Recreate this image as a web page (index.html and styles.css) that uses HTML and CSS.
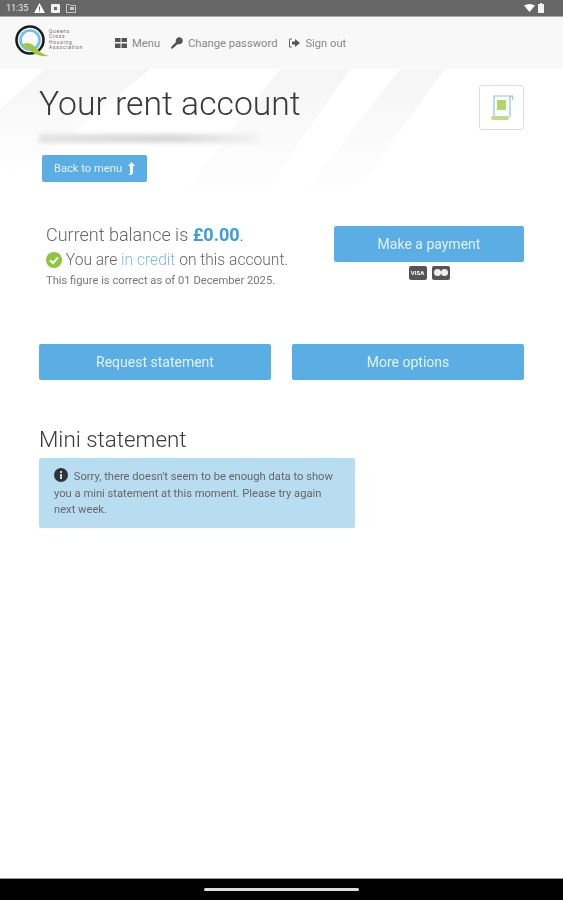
FILE: index.html
```html
<!DOCTYPE html>
<html lang="en">
<head>
    <meta charset="UTF-8">
    <meta name="viewport" content="width=device-width, initial-scale=1.0">
    <title>Your rent account</title>
    <link rel="stylesheet" href="styles.css">
</head>
<body>

    <div class="status-bar">
        <div class="status-left">
            <span class="status-time">11:35</span>
            <svg width="11" height="10" viewBox="0 0 11 10"><path d="M5.500 0 11 10H0Z" fill="#fff"/><rect x="5" y="3.500" width="1" height="3.500" fill="#666"/><rect x="5" y="7.600" width="1" height="1" fill="#666"/></svg>
            <svg width="9" height="9" viewBox="0 0 9 9"><rect width="9" height="9" rx="1" fill="#f2f2f2"/><rect x="3" y="3" width="3" height="3" fill="#666"/></svg>
            <svg width="10" height="10" viewBox="0 0 10 10"><path d="M.5 1.500h3l1 1h5v7h-9Z" fill="none" stroke="#c8c8c8"/><rect x="4" y="4" width="4" height="3" fill="#c8c8c8"/></svg>
        </div>
        <div class="status-right">
            <svg width="11" height="8" viewBox="0 0 11 8"><path d="M0 1.500Q5.500-1.500 11 1.500L5.500 8Z" fill="#fff"/></svg>
            <svg width="6" height="10" viewBox="0 0 6 10"><path d="M2 0h2v1h2v9H0V1h2Z" fill="#f2f2f2"/></svg>
        </div>
    </div>

    <header class="top-nav">
        <div class="logo">
            <svg width="38" height="34" viewBox="0 0 38 34">
                <circle cx="16" cy="15" r="13.500" fill="none" stroke="#1d1d1d" stroke-width="2.600"/>
                <circle cx="16" cy="15" r="9.500" fill="none" stroke="#6cc0ea" stroke-width="2.600"/>
                <path d="M7 20Q15 15 21 22T35 31Q24 32 18 27T7 20Z" fill="#a5c93c"/>
            </svg>
            <div class="logo-text">Queens<br>Cross<br>Housing<br>Association</div>
        </div>
        <nav class="nav-links">
            <a class="nav-link" href="#">
                <svg width="12" height="10" viewBox="0 0 12 10"><path d="M0 0h5.500v4H0ZM6.500 0H12v4H6.500ZM0 5.500h5.500V10H0ZM6.500 5.500H12V10H6.500Z" fill="#555"/></svg>
                Menu
            </a>
            <a class="nav-link" href="#">
                <svg width="12" height="12" viewBox="0 0 12 12"><path d="M0 10 5 5a3.500 3.500 0 1 1 2 2L6 8H5v1H4v1H3l-1 1.500H0Z" fill="#555"/></svg>
                Change password
            </a>
            <a class="nav-link" href="#">
                <svg width="12" height="10" viewBox="0 0 12 10"><path d="M4 1H1.500v8H4" fill="none" stroke="#666"/><path d="M4 3.500h3V1l5 4-5 4V6.500H4Z" fill="#555"/></svg>
                Sign out
            </a>
        </nav>
    </header>

    <main class="page">
        <svg class="page-streaks" width="563" height="130" viewBox="0 0 563 130">
            <defs>
                <linearGradient id="streak-fade" x1="0" y1="0" x2="0" y2="1">
                    <stop offset="0" stop-color="#f5f5f5"/>
                    <stop offset="1" stop-color="#ffffff"/>
                </linearGradient>
            </defs>
            <path d="M0 40 45 0H150L40 90 0 110Z" fill="url(#streak-fade)"/>
            <path d="M180 130 280 0H350L260 130Z" fill="url(#streak-fade)"/>
            <path d="M300 130 400 0H445L350 130Z" fill="url(#streak-fade)"/>
        </svg>

        <div class="title-row">
            <div>
                <h1>Your rent account</h1>
                <div class="redacted"></div>
                <a class="btn btn-back" href="#">
                    Back to menu
                    <svg width="7" height="13" viewBox="0 0 7 13"><path d="M3.500 0 7 4H5v6q0 3-3 3H0q3-1 2-3V4H0Z" fill="#fff"/></svg>
                </a>
            </div>
            <div class="doc-box">
                <svg width="24" height="26" viewBox="0 0 24 26">
                    <path d="M4 21V1H23M20 1V22M20 1Q23 1 23 5" fill="none" stroke="#8cc4e6" stroke-width="1.200"/>
                    <rect x="7" y="5" width="9" height="10" fill="#b5d36b"/>
                    <rect x="1" y="21" width="18" height="4" rx="2" fill="#c3da86"/>
                </svg>
            </div>
        </div>

        <section class="balance-row">
            <div class="balance-info">
                <div class="balance-line">Current balance is <b>£0.00</b>.</div>
                <div class="credit-line">
                    <svg width="16" height="16" viewBox="0 0 16 16"><circle cx="8" cy="8" r="8" fill="#8cc63f"/><path d="M4 8.200 7 11l5-5.500" fill="none" stroke="#fff" stroke-width="2"/></svg>
                    You are <span class="credit">in credit</span> on this account.
                </div>
                <div class="as-of">This figure is correct as of 01 December 2025.</div>
            </div>
            <div class="payment">
                <a class="btn btn-large" href="#">Make a payment</a>
                <div class="cards">
                    <span class="card card-visa">VISA</span>
                    <span class="card card-mc"><i></i><i></i></span>
                </div>
            </div>
        </section>

        <div class="action-row">
            <a class="btn btn-large" href="#">Request statement</a>
            <a class="btn btn-large" href="#">More options</a>
        </div>

        <h2>Mini statement</h2>
        <div class="notice">
            <svg width="14" height="14" viewBox="0 0 14 14"><circle cx="7" cy="7" r="7" fill="#333"/><rect x="6" y="6" width="2" height="5" fill="#b8dcf0"/><rect x="6" y="3" width="2" height="2" fill="#b8dcf0"/></svg>
            Sorry, there doesn't seem to be enough data to show you a mini statement at this moment. Please try again next week.
        </div>
    </main>

    <div class="nav-bar"><div class="home-pill"></div></div>

</body>
</html>
```

FILE: styles.css
```css
html, body {
    height: 100%;
}
body {
    font-family: Roboto, "Liberation Sans", sans-serif;
    font-weight: 300;
    background: white;
    color: #333;
    margin: 0;
    padding: 0;
    display: flex;
    flex-direction: column;
    overflow: hidden;
    filter: blur(0.4px);
}
svg {
    flex-shrink: 0;
}
.status-bar {
    height: 16px;
    background-color: #666;
    border-bottom: 1px solid #aaa;
    display: flex;
    justify-content: space-between;
    align-items: center;
    padding: 0 19px 0 6px;
}
.status-left, .status-right {
    display: flex;
    align-items: center;
    gap: 6px;
}
.status-right {
    gap: 3px;
}
.status-time {
    font-size: 9px;
    font-weight: 400;
    color: #e8e8e8;
}
.top-nav {
    height: 52px;
    background-color: #f8f8f8;
    display: flex;
    align-items: center;
    padding: 0 0 0 14px;
}
.logo {
    display: flex;
    align-items: flex-start;
    width: 101px;
    margin-top: -3px;
}
.logo svg {
    margin-right: -3px;
}
.logo-text {
    font-size: 4.800px;
    line-height: 5.500px;
    letter-spacing: 0.800px;
    font-weight: 400;
    color: #666;
    margin-top: 4px;
}
.nav-links {
    display: flex;
    gap: 11px;
}
.nav-link {
    display: flex;
    align-items: center;
    gap: 5px;
    font-size: 11.200px;
    font-weight: 400;
    color: #888;
    text-decoration: none;
}
.page {
    flex: 1;
    padding: 0 39px;
    position: relative;
    isolation: isolate;
}
.page-streaks {
    position: absolute;
    left: 0;
    top: 0;
    z-index: -1;
}
.title-row {
    display: flex;
    justify-content: space-between;
    align-items: flex-start;
}
h1 {
    font-size: 33.700px;
    font-weight: 300;
    line-height: 42px;
    margin: 13.500px 0 0;
    color: #3a3a3a;
}
.redacted {
    width: 218px;
    height: 9px;
    margin-top: 9.500px;
    background: linear-gradient(to right, #e4e4e4, #d8d8d8 60%, #f2f2f2);
    filter: blur(2px);
}
.btn {
    display: flex;
    align-items: center;
    justify-content: center;
    background-color: #5aaee3;
    color: #e4f2fb;
    font-weight: 400;
    text-decoration: none;
    border-radius: 2px;
}
.btn-back {
    width: 105px;
    height: 27px;
    gap: 6px;
    margin: 12px 0 0 3px;
    font-size: 11.200px;
}
.doc-box {
    width: 43px;
    height: 43px;
    margin-top: 16px;
    border: 1px solid #ddd;
    border-radius: 3px;
    display: flex;
    align-items: center;
    justify-content: center;
}
.balance-row {
    display: flex;
    justify-content: space-between;
    margin-top: 42px;
}
.balance-info {
    padding-left: 7px;
    color: #666;
}
.balance-line {
    font-size: 18px;
    line-height: 21px;
}
.balance-line b {
    color: #3c9fdc;
    font-weight: 700;
}
.credit-line {
    font-size: 15.600px;
    line-height: 18px;
    margin-top: 6px;
}
.credit-line svg {
    vertical-align: -3px;
}
.credit {
    color: #7cb9e8;
}
.as-of {
    font-size: 11.200px;
    font-weight: 400;
    color: #777;
    line-height: 14px;
    margin-top: 5px;
}
.payment {
    width: 190px;
    padding-top: 2px;
}
.btn-large {
    height: 35.500px;
    font-size: 14px;
}
.cards {
    display: flex;
    justify-content: center;
    gap: 5px;
    margin-top: 4px;
}
.card {
    width: 18px;
    height: 14px;
    border-radius: 2px;
    background-color: #555;
    color: white;
    font-size: 6px;
    font-weight: 700;
    display: flex;
    align-items: center;
    justify-content: center;
}
.card-mc i {
    width: 7px;
    height: 7px;
    border-radius: 50%;
    background-color: #eee;
}
.action-row {
    display: grid;
    grid-template-columns: 232px 232px;
    justify-content: space-between;
    margin-top: 56px;
}
h2 {
    font-size: 22.400px;
    font-weight: 300;
    line-height: 26px;
    margin: 46.500px 0 0;
    color: #3a3a3a;
}
.notice {
    width: 316px;
    box-sizing: border-box;
    margin-top: 6px;
    padding: 10px 14px 9px 15px;
    background-color: #b8dcf0;
    border-radius: 2px;
    font-size: 11.200px;
    font-weight: 400;
    line-height: 16.500px;
    color: #666;
}
.notice svg {
    vertical-align: -2px;
    margin-right: 3px;
}
.nav-bar {
    height: 21px;
    background-color: black;
    border-top: 1px solid #999;
    display: flex;
    align-items: center;
    justify-content: center;
}
.home-pill {
    width: 155px;
    height: 3px;
    background-color: #ddd;
    border-radius: 2px;
}
```
